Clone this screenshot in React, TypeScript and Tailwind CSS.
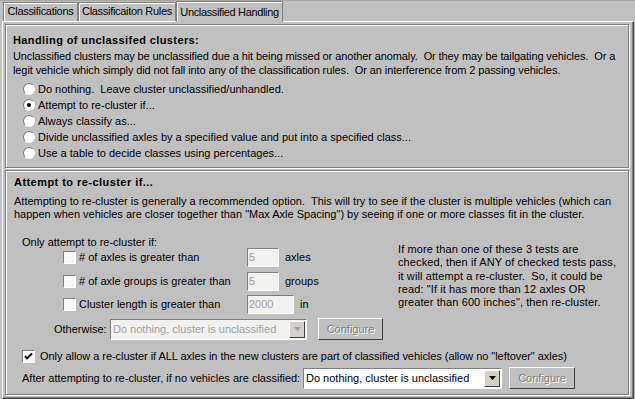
import React from 'react';

const font = "font-['Tahoma','Liberation_Sans',Arial,sans-serif]";

function Tab({ label, w, active }: { label: string; w: string; active?: boolean }) {
  if (active) {
    return (
      <div className={`relative z-10 -mb-px flex h-[21px] ${w} items-start justify-center whitespace-nowrap border border-b-0 border-[#808080] bg-[#c0c0c0] pt-[4px] tracking-[-0.35px] shadow-[inset_1px_1px_0_#fff]`}>
        {label}
      </div>
    );
  }
  return (
    <div className={`flex h-[19px] ${w} items-start justify-center whitespace-nowrap border border-b-0 border-[#808080] bg-[#c0c0c0] pt-[2px] tracking-[-0.3px] shadow-[inset_1px_1px_0_#fff]`}>
      {label}
    </div>
  );
}

function Radio({ checked, label }: { checked?: boolean; label: string }) {
  return (
    <div className="flex h-[16px] items-center">
      <div className="ml-[10px] flex h-[12px] w-[12px] items-center justify-center rounded-full border border-b-white border-l-[#808080] border-r-white border-t-[#808080] bg-white">
        {checked && <div className="h-[4px] w-[4px] rounded-full bg-black" />}
      </div>
      <span className="ml-[3px] whitespace-pre">{label}</span>
    </div>
  );
}

function Check({ checked }: { checked?: boolean }) {
  return (
    <div className="flex h-[13px] w-[13px] shrink-0 items-center justify-center border border-b-white border-l-[#808080] border-r-white border-t-[#808080] bg-[#f8f8f8]">
      {checked && (
        <svg width="9" height="9" viewBox="0 0 9 9">
          <path d="M1 4 L3 6.5 L8 1.5" fill="none" stroke="#000" strokeWidth="1.8" />
        </svg>
      )}
    </div>
  );
}

function Field({ value, w }: { value: string; w: string }) {
  return (
    <div className={`flex h-[19px] ${w} items-center border border-b-white border-l-[#808080] border-r-white border-t-[#808080] bg-[#f2f2f0] pl-[1px] text-[#a0a0a0]`}>
      {value}
    </div>
  );
}

function Select({ disabled, w }: { disabled?: boolean; w: string }) {
  return (
    <div
      className={`flex h-[21px] ${w} items-center border border-b-white border-l-[#808080] border-r-white border-t-[#808080] ${
        disabled ? 'bg-[#f2f2f0] text-[#a0a0a0]' : 'bg-white text-black'
      }`}
    >
      <span className="flex-1 whitespace-nowrap pl-[2px]">Do nothing, cluster is unclassified</span>
      <div className="mr-[1px] flex h-[17px] w-[16px] items-center justify-center border border-b-[#404040] border-l-white border-r-[#404040] border-t-white bg-[#d4d0c8]">
        <svg width="7" height="4" viewBox="0 0 7 4">
          <path d="M0 0 H7 L3.5 4 Z" fill={disabled ? '#a0a0a0' : '#000'} />
        </svg>
      </div>
    </div>
  );
}

function ConfigureButton({ w }: { w: string }) {
  return (
    <div className={`flex h-[22px] ${w} items-center justify-center border border-b-[#404040] border-l-white border-r-[#404040] border-t-white bg-[#c0c0c0] text-[#808080] [text-shadow:1px_1px_0_#fff]`}>
      Configure
    </div>
  );
}

export default function App() {
  return (
    <div className={`h-[399px] w-[635px] overflow-hidden bg-[#c0c0c0] text-[11px] leading-[13px] text-black ${font}`}>
      {/* Tabs */}
      <div className="flex h-[21px] items-end border-t border-[#a8a6a0] pl-[3px]">
        <Tab label="Classifications" w="w-[75px]" />
        <Tab label="Classificaiton Rules" w="w-[98px]" />
        <Tab label="Unclassified Handling" w="w-[107px]" active />
      </div>

      {/* Tab panel */}
      <div className="ml-[2px] h-[378px] w-[632px] border-l border-t border-l-white border-t-white border-r border-b border-r-[#404040] border-b-[#404040] shadow-[inset_-1px_-1px_0_#808080]">
        {/* Group 1 */}
        <div className="ml-[2px] mt-[2px] h-[144px] w-[624px] border border-[#808080] pl-[7px] shadow-[inset_1px_1px_0_#fff,1px_1px_0_#fff]">
          <div className="pt-[9px] font-bold tracking-[0.4px]">Handling of unclassifed clusters:</div>
          <div className="mt-[2px] whitespace-pre leading-[14px] tracking-[-0.1px]">
            {'Unclassified clusters may be unclassified due a hit being missed or another anomaly.  Or they may be tailgating vehicles.  Or a\nlegit vehicle which simply did not fall into any of the classification rules.  Or an interference from 2 passing vehicles.'}
          </div>
          <div className="mt-[4px] flex flex-col">
            <Radio label="Do nothing.  Leave cluster unclassified/unhandled." />
            <Radio checked label="Attempt to re-cluster if..." />
            <Radio label="Always classify as..." />
            <Radio label="Divide unclassified axles by a specified value and put into a specified class..." />
            <Radio label="Use a table to decide classes using percentages..." />
          </div>
        </div>

        {/* Group 2 */}
        <div className="ml-[2px] mt-[2px] h-[225px] w-[624px] border border-[#808080] pl-[8px] shadow-[inset_1px_1px_0_#fff,1px_1px_0_#fff]">
          <div className="pt-[5px] font-bold tracking-[0.45px]">Attempt to re-cluster if...</div>
          <div className="mt-[6px] whitespace-pre">
            {'Attempting to re-cluster is generally a recommended option.  This will try to see if the cluster is multiple vehicles (which can\nhappen when vehicles are closer together than "Max Axle Spacing") by seeing if one or more classes fit in the cluster.'}
          </div>

          <div className="mt-[15px] flex pl-[8px]">
            <div className="w-[376px]">
              <div className="h-[12px]">Only attempt to re-cluster if:</div>

              <div className="flex h-[19px] items-center">
                <div className="ml-[41px] flex w-[184px] items-center">
                  <Check />
                  <span className="ml-[3px]"># of axles is greater than</span>
                </div>
                <Field value="5" w="w-[32px]" />
                <span className="ml-[6px]">axles</span>
              </div>

              <div className="mt-[5px] flex h-[19px] items-center">
                <div className="ml-[41px] flex w-[184px] items-center">
                  <Check />
                  <span className="ml-[3px]"># of axle groups is greater than</span>
                </div>
                <Field value="5" w="w-[32px]" />
                <span className="ml-[6px]">groups</span>
              </div>

              <div className="mt-[4px] flex h-[19px] items-center">
                <div className="ml-[41px] flex w-[184px] items-center">
                  <Check />
                  <span className="ml-[3px]">Cluster length is greater than</span>
                </div>
                <Field value="2000" w="w-[47px]" />
                <span className="ml-[6px]">in</span>
              </div>

              <div className="mt-[4px] flex h-[22px] items-center">
                <span className="ml-[32px] w-[56px]">Otherwise:</span>
                <Select disabled w="w-[197px]" />
                <div className="ml-[11px]">
                  <ConfigureButton w="w-[65px]" />
                </div>
              </div>
            </div>

            <div className="mt-[7px] whitespace-pre leading-[13.3px] tracking-[0.1px]">
              {'If more than one of these 3 tests are\nchecked, then if ANY of checked tests pass,\nit will attempt a re-cluster.  So, it could be\nread: "If it has more than 12 axles OR\ngreater than 600 inches", then re-cluster.'}
            </div>
          </div>

          <div className="mt-[10px] flex h-[13px] items-center pl-[8px]">
            <Check checked />
            <span className="ml-[5px] whitespace-pre tracking-[-0.05px]">
              Only allow a re-cluster if ALL axles in the new clusters are part of classified vehicles (allow no "leftover" axles)
            </span>
          </div>

          <div className="mt-[4px] flex h-[22px] items-center pl-[8px]">
            <span className="w-[281px] whitespace-nowrap">After attempting to re-cluster, if no vehicles are classified:</span>
            <Select w="w-[199px]" />
            <div className="ml-[7px]">
              <ConfigureButton w="w-[66px]" />
            </div>
          </div>
        </div>
      </div>
    </div>
  );
}
